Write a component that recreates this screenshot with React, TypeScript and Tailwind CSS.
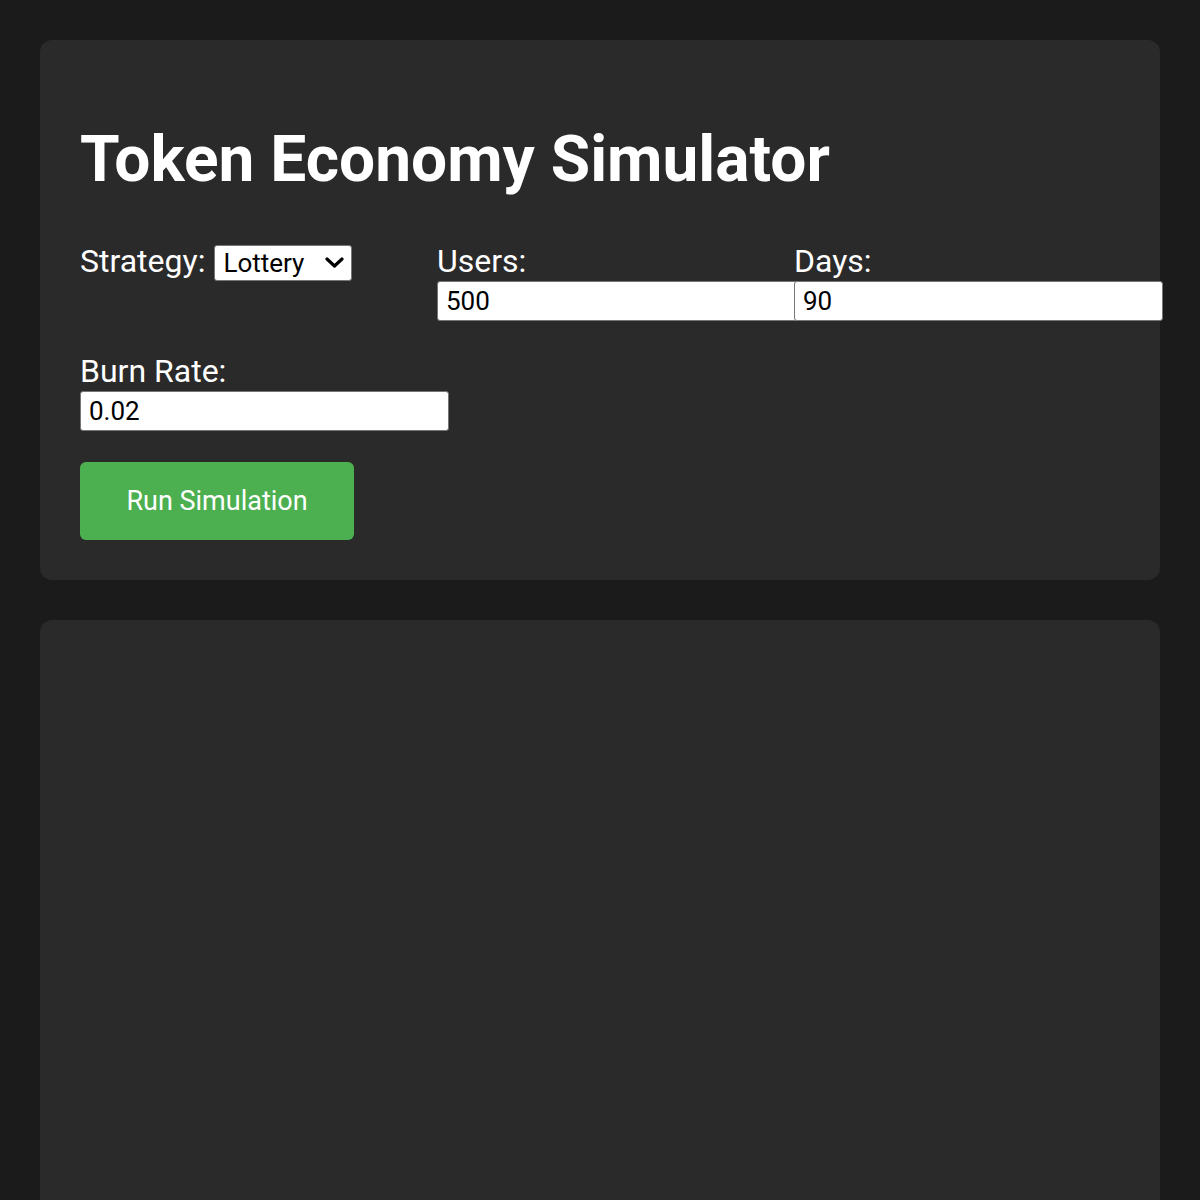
import { useState } from "react"

const FONT = "font-['Roboto','Liberation_Sans',sans-serif]"
const LABEL = "block h-[32px] text-[32px] leading-[32px] text-white"
const INPUT =
  "mt-[4px] block h-[40px] w-[369px] rounded-[3px] border border-[#767676] bg-white px-[8px] text-[26px] leading-[30px] text-black outline-none"

function Field({
  label,
  value,
  onChange,
}: {
  label: string
  value: string
  onChange: (v: string) => void
}) {
  return (
    <label className="block">
      <span className={LABEL}>{label}</span>
      <input
        type="number"
        value={value}
        onChange={(e) => onChange(e.target.value)}
        className={INPUT}
      />
    </label>
  )
}

export default function App() {
  const [strategy, setStrategy] = useState("lottery")
  const [users, setUsers] = useState("500")
  const [days, setDays] = useState("90")
  const [burnRate, setBurnRate] = useState("0.02")

  return (
    <div className={`min-h-[1200px] bg-[#1b1b1b] p-[40px] ${FONT}`}>
      <section className="rounded-[12px] bg-[#2a2a2a] p-[40px]">
        <h1 className="mt-[42px] text-[64px] font-bold leading-[76px] text-white">
          Token Economy Simulator
        </h1>

        <div className="mt-[47px] grid grid-cols-[357px_357px_357px] gap-y-[34px]">
          <div className="flex items-start">
            <span className="h-[32px] text-[32px] leading-[32px] text-white">Strategy:</span>
            <div className="relative ml-[9px]">
              <select
                value={strategy}
                onChange={(e) => setStrategy(e.target.value)}
                className="block h-[36px] w-[138px] appearance-none rounded-[3px] border border-[#767676] bg-white pl-[8px] pr-[30px] text-[26px] leading-[30px] text-black outline-none"
              >
                <option value="lottery">Lottery</option>
                <option value="fixed">Fixed</option>
                <option value="random">Random</option>
              </select>
              <svg
                className="pointer-events-none absolute right-[8px] top-[12px] h-[11px] w-[19px]"
                viewBox="0 0 19 11"
                fill="none"
              >
                <path
                  d="M2 2 L9.5 9 L17 2"
                  stroke="#000"
                  strokeWidth="3.2"
                  strokeLinecap="round"
                  strokeLinejoin="round"
                />
              </svg>
            </div>
          </div>
          <Field label="Users:" value={users} onChange={setUsers} />
          <Field label="Days:" value={days} onChange={setDays} />
          <Field label="Burn Rate:" value={burnRate} onChange={setBurnRate} />
        </div>

        <button className="mt-[31px] h-[78px] w-[274px] rounded-[6px] bg-[#4caf50] text-[27px] text-white">
          Run Simulation
        </button>
      </section>

      <section className="mt-[40px] h-[640px] rounded-[12px] bg-[#2a2a2a]" />
    </div>
  )
}
